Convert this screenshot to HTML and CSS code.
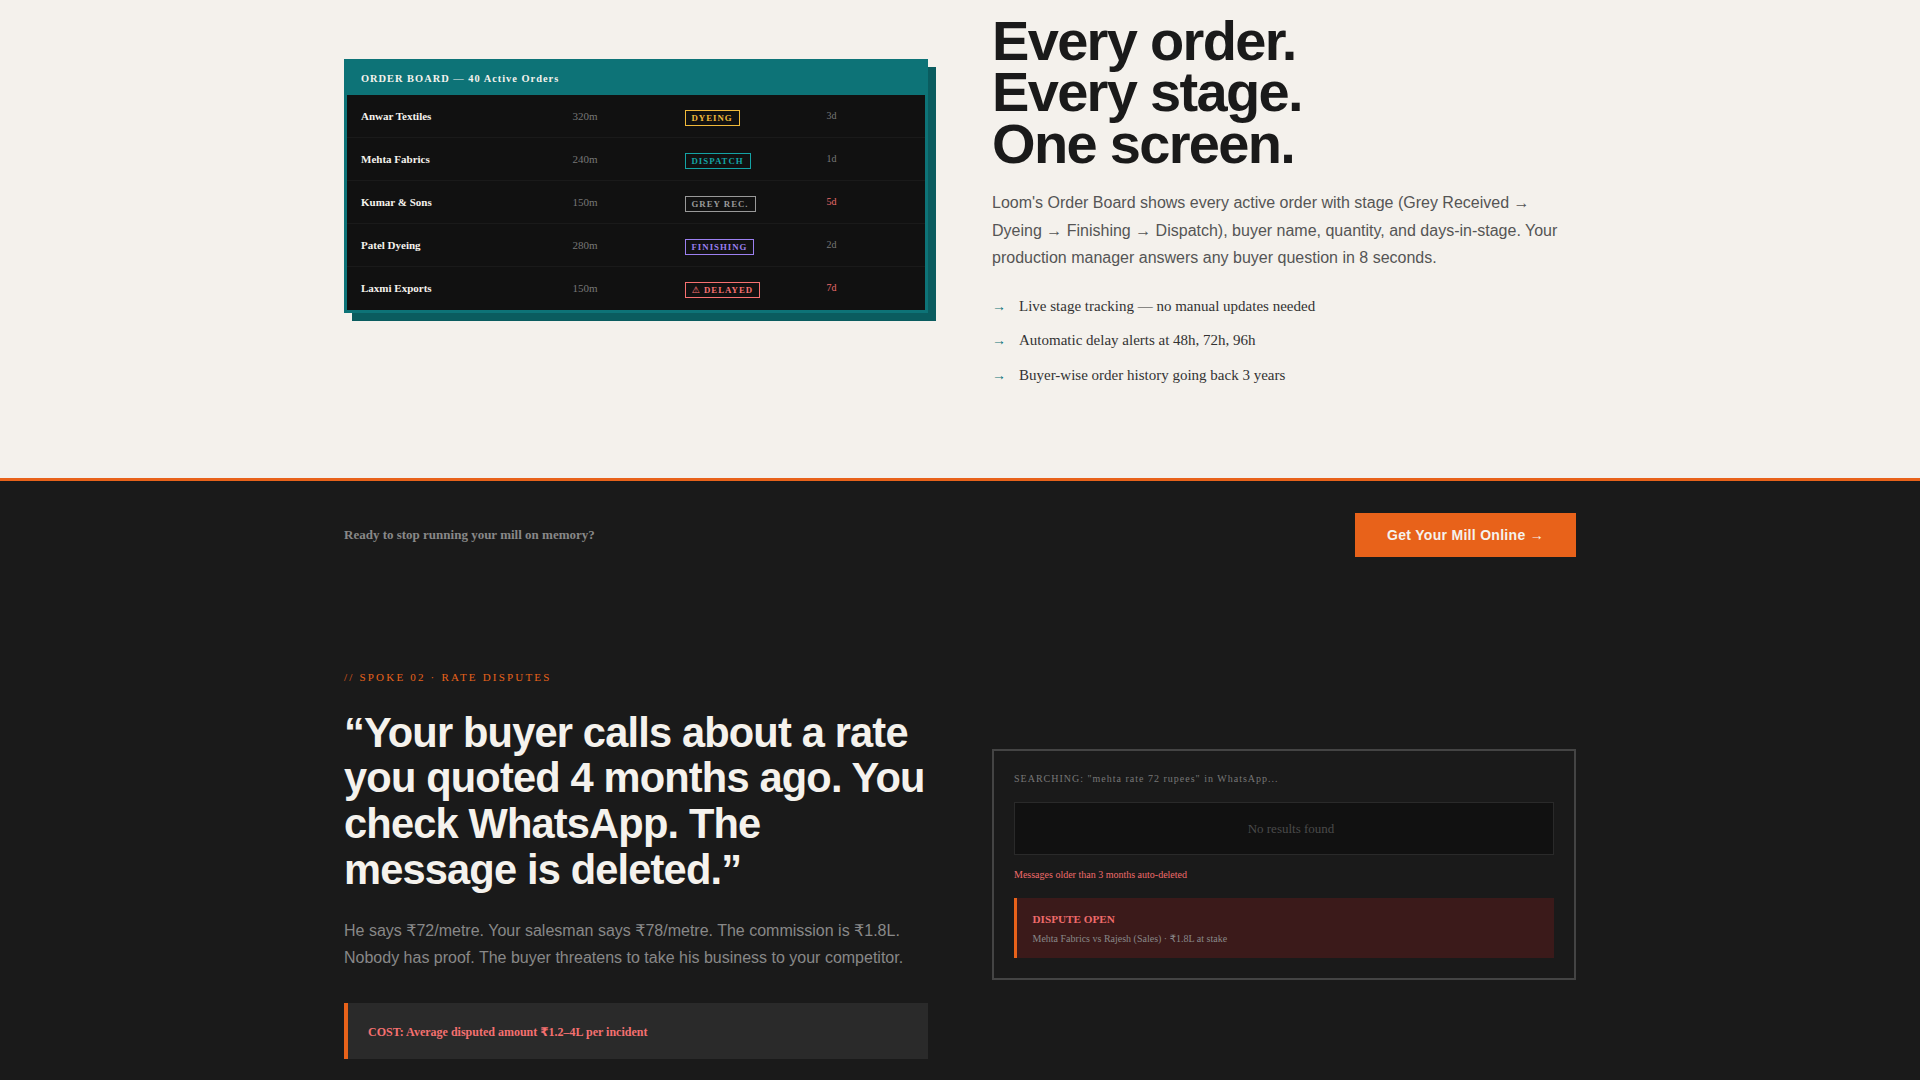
FILE: index.html
```html
<!DOCTYPE html>
<html lang="en">
<head>
<meta charset="utf-8">
<title>Loom</title>
<link rel="stylesheet" href="styles.css">
</head>
<body>
<section class="light">
  <div class="columns top-columns">
    <div class="board">
      <div class="board-head">ORDER BOARD — 40 Active Orders</div>
      <div class="row"><span class="buyer">Anwar Textiles</span><span class="qty">320m</span><span><span class="tag dyeing">DYEING</span></span><span class="days">3d</span></div>
      <div class="row"><span class="buyer">Mehta Fabrics</span><span class="qty">240m</span><span><span class="tag dispatch">DISPATCH</span></span><span class="days">1d</span></div>
      <div class="row"><span class="buyer">Kumar &amp; Sons</span><span class="qty">150m</span><span><span class="tag grey">GREY REC.</span></span><span class="days late">5d</span></div>
      <div class="row"><span class="buyer">Patel Dyeing</span><span class="qty">280m</span><span><span class="tag finishing">FINISHING</span></span><span class="days">2d</span></div>
      <div class="row"><span class="buyer">Laxmi Exports</span><span class="qty">150m</span><span><span class="tag delayed"><span class="warn-glyph">⚠</span> DELAYED</span></span><span class="days late">7d</span></div>
    </div>
    <div class="copy">
      <h2 class="title-light">Every order.<br>Every stage.<br>One screen.</h2>
      <p class="lead">Loom's Order Board shows every active order with stage (Grey Received → Dyeing → Finishing → Dispatch), buyer name, quantity, and days-in-stage. Your production manager answers any buyer question in 8 seconds.</p>
      <ul class="points">
        <li><span class="arrow">→</span>Live stage tracking — no manual updates needed</li>
        <li><span class="arrow">→</span>Automatic delay alerts at 48h, 72h, 96h</li>
        <li><span class="arrow">→</span>Buyer-wise order history going back 3 years</li>
      </ul>
    </div>
  </div>
</section>
<section class="dark">
  <div class="cta">
    <span class="cta-text">Ready to stop running your mill on memory?</span>
    <a class="cta-button" href="#">Get Your Mill Online →</a>
  </div>
  <div class="columns spoke">
    <div>
      <div class="kicker">// SPOKE 02 · RATE DISPUTES</div>
      <h2 class="title-dark">“Your buyer calls about a rate you quoted 4 months ago. You check WhatsApp. The message is deleted.”</h2>
      <p class="body-dark">He says <span class="rupee">₹</span>72/metre. Your salesman says <span class="rupee">₹</span>78/metre. The commission is <span class="rupee">₹</span>1.8L. Nobody has proof. The buyer threatens to take his business to your competitor.</p>
      <div class="cost">COST: Average disputed amount <span class="rupee">₹</span>1.2–4L per incident</div>
    </div>
    <div class="panel">
      <div class="search">SEARCHING: "mehta rate 72 rupees" in WhatsApp...</div>
      <div class="results">No results found</div>
      <div class="warn">Messages older than 3 months auto-deleted</div>
      <div class="dispute">
        <div class="dispute-title">DISPUTE OPEN</div>
        <div class="dispute-sub">Mehta Fabrics vs Rajesh (Sales) · <span class="rupee">₹</span>1.8L at stake</div>
      </div>
    </div>
  </div>
</section>
</body>
</html>
```
FILE: styles.css
```css
* { box-sizing: border-box; }
html, body { margin: 0; padding: 0; }
body { font-family: "Liberation Serif", "Noto Sans CJK SC", serif; background: #1a1a1a; overflow: hidden; height: 1080px; }

.columns { width: 1232px; margin: 0 auto; display: grid; grid-template-columns: 584px 584px; column-gap: 64px; }

.light { background: #f4f1ec; height: 481px; border-bottom: 3px solid #e8621a; }
.top-columns { align-items: start; }

.board { margin-top: 59px; background: #111; border: 3px solid #0d7377; box-shadow: 8px 8px 0 #0a5c5f; }
.board-head { background: #0d7377; color: #f5f2ed; font-size: 10.4px; font-weight: 700; letter-spacing: 1px; height: 33px; padding: 0 14px 1px; display: flex; align-items: center; }
.row { display: grid; grid-template-columns: 211.5px 112px 142px 1fr; height: 43px; padding: 0 14px; align-items: center; border-bottom: 1px solid #1a1a1a; }
.row:last-child { border-bottom-color: #111; height: 42.5px; }
.buyer { color: #f5f2ed; font-size: 11px; font-weight: 700; }
.qty { color: #777; font-size: 11px; }
.days { color: #777; font-size: 10px; margin-top: -1.5px; }
.days.late { color: #e86a6a; }
.tag { display: inline-block; font-size: 8.8px; font-weight: 700; letter-spacing: 1px; padding: 2px 6px; border: 1px solid; line-height: 10px; margin-top: 4px; vertical-align: middle; }
.warn-glyph { font-family: "DejaVu Sans", sans-serif; font-size: 9.2px; line-height: 0; }
.dyeing { color: #f0b93a; }
.dispatch { color: #14a3a5; }
.grey { color: #999; }
.finishing { color: #9b7ff0; }
.delayed { color: #f87171; }

.copy { padding-top: 14.7px; }
.title-light { margin: 0; color: #1a1a1a; font-family: "Liberation Sans", sans-serif; font-size: 56px; font-weight: 700; line-height: 51.52px; letter-spacing: -1.68px; }
.lead { margin: 19.7px 0 0; color: #555; font-family: "Liberation Sans", sans-serif; font-size: 16px; line-height: 27.6px; }
.points { list-style: none; margin: 16.8px 0 0; padding: 0; }
.points li { color: #333; font-size: 15px; line-height: 22px; padding: 6px 0; margin-bottom: 0.6px; display: flex; }
.arrow { color: #0d7377; width: 27px; flex: none; font-size: 14px; line-height: 21px; padding-top: 1px; }

.dark { background: #1a1a1a; }
.cta { width: 1232px; margin: 0 auto; height: 102px; padding-top: 32px; display: flex; justify-content: space-between; align-items: flex-start; }
.cta-text { color: #888; font-size: 13px; font-weight: 700; margin-top: 14px; }
.cta-button { display: block; background: #e8621a; color: #f5f2ed; font-family: "Liberation Sans", sans-serif; font-size: 14px; font-weight: 700; letter-spacing: 0.3px; height: 44px; line-height: 44px; width: 221px; text-align: center; text-decoration: none; }

.spoke { align-items: center; padding-top: 87px; }
.kicker { color: #e8621a; font-size: 11px; letter-spacing: 2.2px; line-height: 14px; }
.title-dark { margin: 25.6px 0 0; color: #f5f2ed; font-family: "Liberation Sans", sans-serif; font-size: 41.6px; font-weight: 700; line-height: 45.76px; letter-spacing: -0.832px; }
.body-dark { margin: 24.4px 0 0; color: #888; font-family: "Liberation Sans", sans-serif; font-size: 16px; line-height: 27.2px; }
.rupee { font-family: "DejaVu Sans", sans-serif; }
.cost { margin-top: 32px; height: 56px; background: #2a2a2a; border-left: 4px solid #e8621a; padding: 1px 20px 0; line-height: 56px; color: #f47070; font-size: 12px; font-weight: 700; }

.panel { border: 2px solid #444; padding: 20px; background: #1a1a1a; }
.search { color: #777; font-size: 10px; letter-spacing: 1px; line-height: 16px; }
.results { margin-top: 15px; height: 53px; background: #111; border: 1px solid #2a2a2a; color: #4a4a4a; font-size: 13px; padding-left: 14px; display: flex; align-items: center; justify-content: center; }
.warn { margin-top: 13px; color: #ef6b6b; font-size: 10px; line-height: 14px; }
.dispute { margin-top: 16px; height: 60px; background: #3b1a1a; border-left: 3px solid #e8621a; padding: 13.5px 15.5px; }
.dispute-title { color: #ef6b6b; font-size: 11.2px; font-weight: 700; line-height: 14px; }
.dispute-sub { color: #888; font-size: 10px; line-height: 14px; margin-top: 6.5px; }
```
